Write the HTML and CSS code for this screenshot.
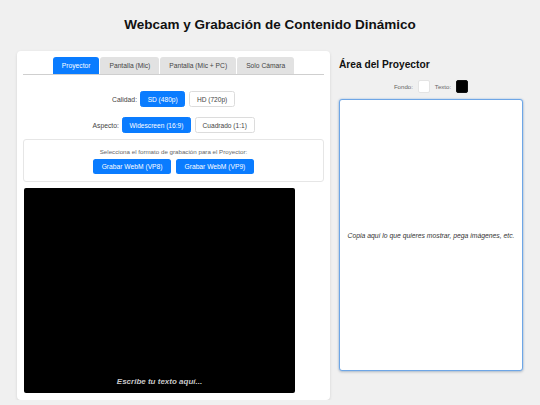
FILE: index.html
```html
<!DOCTYPE html>
<html lang="es">
<head>
<meta charset="utf-8">
<title>Webcam y Grabación de Contenido Dinámico</title>
<link rel="stylesheet" href="styles.css">
</head>
<body>
<h1 class="title">Webcam y Grabación de Contenido Dinámico</h1>
<div class="layout">
  <section class="card">
    <nav class="tabs">
      <button class="tab active">Proyector</button>
      <button class="tab">Pantalla (Mic)</button>
      <button class="tab">Pantalla (Mic + PC)</button>
      <button class="tab">Solo Cámara</button>
    </nav>
    <div class="option-row first">
      <span class="label">Calidad:</span>
      <button class="opt selected">SD (480p)</button>
      <button class="opt">HD (720p)</button>
    </div>
    <div class="option-row">
      <span class="label">Aspecto:</span>
      <button class="opt selected">Widescreen (16:9)</button>
      <button class="opt">Cuadrado (1:1)</button>
    </div>
    <div class="format-box">
      <p class="format-text">Selecciona el formato de grabación para el Proyector:</p>
      <div class="format-buttons">
        <button class="rec">Grabar WebM (VP8)</button>
        <button class="rec">Grabar WebM (VP9)</button>
      </div>
    </div>
    <div class="video">
      <span class="video-text">Escribe tu texto aquí...</span>
    </div>
  </section>
  <aside class="side">
    <h2 class="side-title">Área del Proyector</h2>
    <div class="colors">
      <span class="clabel">Fondo:</span>
      <span class="swatch white"></span>
      <span class="clabel">Texto:</span>
      <span class="swatch black"></span>
    </div>
    <div class="editor">
      <span class="placeholder">Copia aquí lo que quieres mostrar, pega imágenes, etc.</span>
    </div>
  </aside>
</div>
</body>
</html>
```
FILE: styles.css
```css
* { box-sizing: border-box; }
html, body { margin: 0; padding: 0; }
body {
  background: #f0f0f0;
  font-family: "Liberation Sans", Arial, sans-serif;
  color: #222;
  padding: 0 17px;
}
.title {
  margin: 17px 0 18px;
  font-size: 13.5px;
  line-height: 16px;
  text-align: center;
  font-weight: bold;
  color: #111;
}
.layout {
  display: grid;
  grid-template-columns: 313px 184px;
  column-gap: 9px;
  align-items: start;
}
.card {
  background: #fff;
  border-radius: 4px;
  box-shadow: 0 1px 3px rgba(0,0,0,0.12);
  padding: 6px 6px 7px;
  display: flex;
  flex-direction: column;
}
button {
  font-family: "Liberation Sans", Arial, sans-serif;
  cursor: pointer;
}
.tabs {
  display: flex;
  justify-content: center;
  gap: 1px;
  border-bottom: 1px solid #cfcfcf;
}
.tab {
  height: 17px;
  padding: 0 9px;
  border: none;
  border-radius: 3px 3px 0 0;
  background: #e2e2e2;
  color: #444;
  font-size: 6.7px;
}
.tab.active {
  background: #0a7cff;
  color: #fff;
}
.option-row {
  display: flex;
  justify-content: center;
  align-items: center;
  gap: 4px;
  margin-top: 10px;
}
.option-row.first { margin-top: 16px; }
.label {
  font-size: 6.8px;
  color: #444;
  margin-right: -1px;
}
.opt {
  height: 16px;
  padding: 0 6.6px;
  font-size: 6.6px;
  border: 1px solid #dcdcdc;
  border-radius: 2.5px;
  background: #fff;
  color: #444;
}
.opt.selected {
  background: #0a7cff;
  border-color: #0a7cff;
  color: #fff;
}
.format-box {
  margin-top: 6px;
  border: 1px solid #e6e6e6;
  border-radius: 3px;
  padding: 8px 0 7px;
  text-align: center;
}
.format-text {
  margin: 0 0 3px;
  font-size: 6.2px;
  line-height: 8px;
  color: #666;
}
.format-buttons {
  display: flex;
  justify-content: center;
  gap: 5px;
}
.rec {
  height: 15px;
  padding: 0 8.5px;
  font-size: 6.7px;
  border: none;
  border-radius: 2.5px;
  background: #0a7cff;
  color: #fff;
}
.video {
  margin-top: 6px;
  margin-left: 1px;
  width: 271px;
  height: 205px;
  background: #000;
  border-radius: 2px;
  display: flex;
  align-items: flex-end;
  justify-content: center;
  padding-bottom: 6px;
}
.video-text {
  font-size: 8px;
  line-height: 10px;
  font-weight: bold;
  font-style: italic;
  color: #c8c8c8;
}
.side {
  display: flex;
  flex-direction: column;
}
.side-title {
  margin: 8px 0 0;
  font-size: 10.2px;
  line-height: 12px;
  font-weight: bold;
  color: #111;
}
.colors {
  display: flex;
  justify-content: center;
  align-items: center;
  gap: 5px;
  margin-top: 9px;
}
.clabel {
  font-size: 6.1px;
  color: #666;
}
.swatch {
  width: 12px;
  height: 13px;
  border-radius: 2px;
  border: 1px solid #e4e4e4;
}
.swatch.white { background: #fff; }
.swatch.black { background: #000; border-color: #111; }
.editor {
  margin-top: 6px;
  height: 272px;
  background: #fff;
  border: 1px solid #6ea6e6;
  border-radius: 3px;
  box-shadow: 0 0 2px rgba(10,124,255,0.35), 0 1px 3px rgba(0,0,0,0.2);
  display: flex;
  align-items: center;
  justify-content: center;
}
.placeholder {
  font-size: 6.8px;
  font-style: italic;
  color: #333;
}
```
